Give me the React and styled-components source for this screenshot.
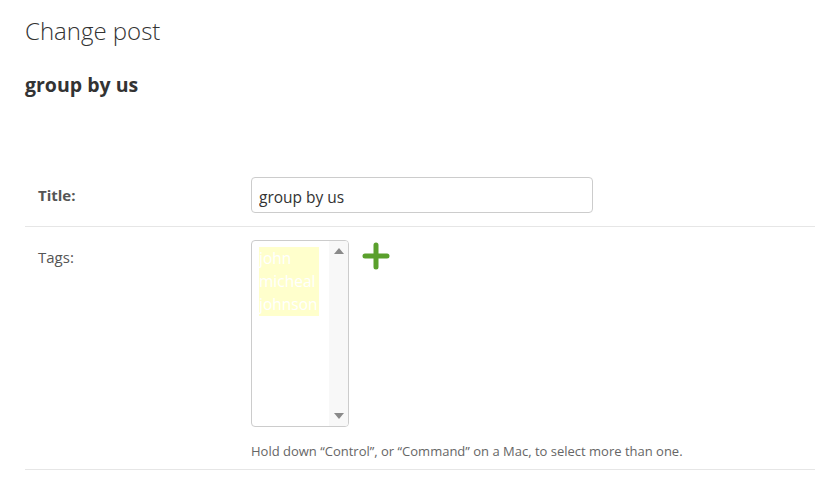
import React from "react";
import styled, { createGlobalStyle } from "styled-components";

const GlobalStyle = createGlobalStyle`
  html, body {
    margin: 0;
    padding: 0;
    background: #fff;
  }
  body {
    font-family: "Open Sans", "Noto Sans", sans-serif;
    color: #333;
  }
`;

const Page = styled.div`
  padding: 14px 0 0 25px;
`;

const Heading = styled.h1`
  margin: 0;
  font-size: 24px;
  font-weight: 300;
  line-height: 34px;
  color: #333;
`;

const SubHeading = styled.h2`
  margin: 24px 0 0;
  font-size: 19.5px;
  font-weight: 700;
  line-height: 26px;
  color: #333;
`;

const Fieldset = styled.div`
  margin-top: 69px;
`;

const Row = styled.div`
  display: flex;
  align-items: ${(p) => (p.$center ? "center" : "flex-start")};
  padding: ${(p) => p.$pad};
  border-bottom: 1px solid #e6e6e6;
`;

const Label = styled.label`
  width: 213px;
  flex: none;
  padding-left: 13px;
  font-size: 15px;
  color: #555;
  font-weight: ${(p) => (p.$required ? 700 : 400)};
  padding-top: ${(p) => p.$top || 0}px;
`;

const TextInput = styled.input`
  box-sizing: border-box;
  width: 342px;
  height: 36px;
  padding: 3px 7px 0;
  border: 1px solid #ccc;
  border-radius: 4px;
  font-family: inherit;
  font-size: 15.5px;
  color: #333;
  outline: none;
`;

const Field = styled.div`
  display: flex;
  flex-direction: column;
`;

const SelectLine = styled.div`
  display: flex;
  align-items: flex-start;
  gap: 13px;
`;

const ListBox = styled.div`
  box-sizing: border-box;
  width: 98px;
  height: 187px;
  border: 1px solid #ccc;
  border-radius: 4px;
  display: flex;
  overflow: hidden;
`;

const Options = styled.div`
  flex: 1;
  padding: 6px 0 0 7px;
  display: flex;
  flex-direction: column;
  align-items: flex-start;
`;

const OptionList = styled.div`
  background: #ffffcc;
  padding-right: 2px;
`;

const Option = styled.div`
  font-size: 15.5px;
  line-height: 23px;
  color: #fff;
  white-space: nowrap;
`;

const Scrollbar = styled.div`
  width: 19px;
  background: #f8f8f8;
  display: flex;
  flex-direction: column;
  justify-content: space-between;
  align-items: center;
  padding: 7px 0;
`;

const Arrow = styled.div`
  width: 0;
  height: 0;
  border-left: 5px solid transparent;
  border-right: 5px solid transparent;
  ${(p) =>
    p.$down
      ? "border-top: 6px solid #8a8a8a;"
      : "border-bottom: 6px solid #8a8a8a;"}
`;

const AddLink = styled.a`
  display: block;
  margin-top: 2px;
  line-height: 0;
`;

const Help = styled.div`
  margin-top: 15px;
  font-size: 13px;
  color: #666;
`;

const PlusIcon = () => (
  <svg width="28" height="28" viewBox="0 0 28 28">
    <path
      d="M14 3v22M3 14h22"
      stroke="#5aa02c"
      strokeWidth="5"
      strokeLinecap="round"
    />
  </svg>
);

export default function App() {
  const tags = ["john", "micheal", "johnson"];
  return (
    <Page>
      <GlobalStyle />
      <Heading>Change post</Heading>
      <SubHeading>group by us</SubHeading>
      <Fieldset>
        <Row $center $pad="10px 0 13px">
          <Label $required>Title:</Label>
          <TextInput defaultValue="group by us" />
        </Row>
        <Row $pad="13px 0 9px">
          <Label $top={7}>Tags:</Label>
          <Field>
            <SelectLine>
              <ListBox>
                <Options>
                  <OptionList>
                    {tags.map((t) => (
                      <Option key={t}>{t}</Option>
                    ))}
                  </OptionList>
                </Options>
                <Scrollbar>
                  <Arrow />
                  <Arrow $down />
                </Scrollbar>
              </ListBox>
              <AddLink href="#">
                <PlusIcon />
              </AddLink>
            </SelectLine>
            <Help>
              Hold down “Control”, or “Command” on a Mac, to select more than
              one.
            </Help>
          </Field>
        </Row>
      </Fieldset>
    </Page>
  );
}
